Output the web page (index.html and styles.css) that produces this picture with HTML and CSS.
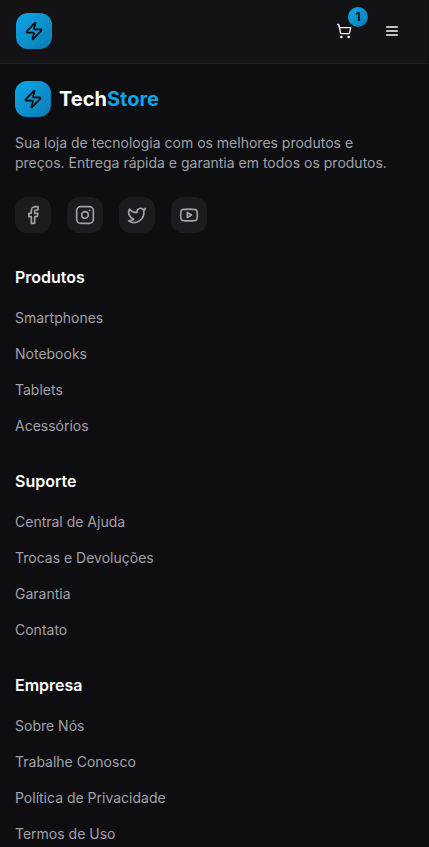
FILE: index.html
```html
<!DOCTYPE html>
<html lang="pt-BR">
<head>
<meta charset="utf-8">
<meta name="viewport" content="width=device-width, initial-scale=1">
<title>TechStore</title>
<link rel="stylesheet" href="styles.css">
</head>
<body>
<header class="header">
  <a class="logo-mark"><svg class="icon" width="20" height="20" viewBox="0 0 24 24"><path d="M4 14a1 1 0 0 1-.78-1.63l9.9-10.2a.5.5 0 0 1 .86.46l-1.92 6.02A1 1 0 0 0 13 10h7a1 1 0 0 1 .78 1.63l-9.9 10.2a.5.5 0 0 1-.86-.46l1.92-6.02A1 1 0 0 0 11 14z"/></svg></a>
  <div class="actions">
    <a class="action"><svg class="icon" width="16" height="16" viewBox="0 0 24 24"><circle cx="8" cy="21" r="1"/><circle cx="19" cy="21" r="1"/><path d="M2.05 2.05h2l2.66 12.42a2 2 0 0 0 2 1.58h9.78a2 2 0 0 0 1.95-1.57l1.65-7.43H5.12"/></svg><span class="badge">1</span></a>
    <a class="action"><svg class="icon" width="16" height="16" viewBox="0 0 24 24"><path d="M4 6h16M4 12h16M4 18h16"/></svg></a>
  </div>
</header>
<footer class="footer">
  <section class="about">
    <div class="brand">
      <span class="logo-mark"><svg class="icon" width="20" height="20" viewBox="0 0 24 24"><path d="M4 14a1 1 0 0 1-.78-1.63l9.9-10.2a.5.5 0 0 1 .86.46l-1.92 6.02A1 1 0 0 0 13 10h7a1 1 0 0 1 .78 1.63l-9.9 10.2a.5.5 0 0 1-.86-.46l1.92-6.02A1 1 0 0 0 11 14z"/></svg></span>
      <span class="brand-name">Tech<span class="accent">Store</span></span>
    </div>
    <p class="description">Sua loja de tecnologia com os melhores produtos e preços. Entrega rápida e garantia em todos os produtos.</p>
    <div class="social">
      <a class="social-link"><svg class="icon" width="20" height="20" viewBox="0 0 24 24"><path d="M18 2h-3a5 5 0 0 0-5 5v3H7v4h3v8h4v-8h3l1-4h-4V7a1 1 0 0 1 1-1h3z"/></svg></a>
      <a class="social-link"><svg class="icon" width="20" height="20" viewBox="0 0 24 24"><rect x="2" y="2" width="20" height="20" rx="5"/><path d="M16 11.37A4 4 0 1 1 12.63 8 4 4 0 0 1 16 11.37zM17.5 6.5h.01"/></svg></a>
      <a class="social-link"><svg class="icon" width="20" height="20" viewBox="0 0 24 24"><path d="M22 4s-.7 2.1-2 3.4c1.6 10-9.4 17.3-18 11.6 2.2.1 4.4-.6 6-2C3 15.5.5 9.6 3 5c2.2 2.6 5.6 4.1 9 4-.9-4.2 4-6.6 7-3.8 1.1 0 3-1.2 3-1.2z"/></svg></a>
      <a class="social-link"><svg class="icon" width="20" height="20" viewBox="0 0 24 24"><path d="M2.5 17a24.12 24.12 0 0 1 0-10 2 2 0 0 1 1.4-1.4 49.56 49.56 0 0 1 16.2 0A2 2 0 0 1 21.5 7a24.12 24.12 0 0 1 0 10 2 2 0 0 1-1.4 1.4 49.55 49.55 0 0 1-16.2 0A2 2 0 0 1 2.5 17"/><path d="m10 15 5-3-5-3z"/></svg></a>
    </div>
  </section>
  <nav>
    <h3 class="title">Produtos</h3>
    <ul class="links"><li>Smartphones</li><li>Notebooks</li><li>Tablets</li><li>Acessórios</li></ul>
  </nav>
  <nav>
    <h3 class="title">Suporte</h3>
    <ul class="links"><li>Central de Ajuda</li><li>Trocas e Devoluções</li><li>Garantia</li><li>Contato</li></ul>
  </nav>
  <nav>
    <h3 class="title">Empresa</h3>
    <ul class="links"><li>Sobre Nós</li><li>Trabalhe Conosco</li><li>Política de Privacidade</li><li>Termos de Uso</li></ul>
  </nav>
</footer>
</body>
</html>
```
FILE: styles.css
```css
* { box-sizing: border-box; margin: 0; padding: 0; }
html { background: #0e0e10; }
body {
  height: 847px;
  overflow: hidden;
  font: 14px/20px Inter, sans-serif;
  color: #a1a1aa;
}
.icon {
  display: block;
  fill: none;
  stroke: currentColor;
  stroke-width: 2;
  stroke-linecap: round;
  stroke-linejoin: round;
}
.header {
  display: flex;
  align-items: center;
  justify-content: space-between;
  height: 64px;
  margin-right: 1px;
  padding: 0 18px 1px 16px;
  background: #131315;
  border-bottom: 1px solid #222224;
}
.logo-mark {
  display: flex;
  align-items: center;
  justify-content: center;
  width: 36px;
  height: 36px;
  border-radius: 12px;
  background: linear-gradient(135deg, #0ea5e9, #0b7db1);
  color: #0a0a0b;
}
.actions { display: flex; gap: 12px; }
.action {
  position: relative;
  display: flex;
  align-items: center;
  justify-content: center;
  width: 36px;
  height: 36px;
  color: #fafafa;
}
.badge {
  position: absolute;
  top: -6px;
  right: -6px;
  width: 20px;
  height: 20px;
  border-radius: 50%;
  background: linear-gradient(135deg, #0ea5e9, #0b7db1);
  color: #0a0a0b;
  font-size: 12px;
  font-weight: 700;
  text-align: center;
}
.footer {
  display: grid;
  gap: 32px;
  padding: 17px 15px;
}
.brand {
  display: flex;
  align-items: center;
  gap: 8px;
  margin-bottom: 16px;
}
.brand-name {
  color: #fff;
  font-size: 20px;
  line-height: 28px;
  font-weight: 700;
}
.accent { color: #0ea5e9; }
.description {
  max-width: 384px;
  margin-bottom: 24px;
}
.social { display: flex; gap: 16px; }
.social-link {
  display: flex;
  align-items: center;
  justify-content: center;
  width: 36px;
  height: 36px;
  border-radius: 12px;
  background: #1c1c1e;
}
.title {
  margin-bottom: 16px;
  color: #fff;
  font-size: 16px;
  line-height: 24px;
  font-weight: 600;
}
.links {
  display: grid;
  gap: 12px;
  list-style: none;
}
.links li {
  height: 24px;
  line-height: 26px;
}
```
